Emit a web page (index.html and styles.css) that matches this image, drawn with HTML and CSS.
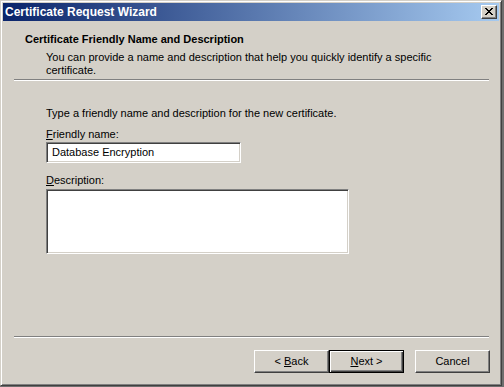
FILE: index.html
```html
<!DOCTYPE html>
<html>
<head>
<meta charset="utf-8">
<title>Certificate Request Wizard</title>
<link rel="stylesheet" href="styles.css">
</head>
<body>
<div class="window">
  <div class="titlebar">
    <span class="title">Certificate Request Wizard</span>
    <span class="close-btn">
      <svg width="8" height="7" viewBox="0 0 8 7"><path d="M0 0h2v1h-2zM6 0h2v1h-2zM1 1h2v1h-2zM5 1h2v1h-2zM2 2h4v1h-4zM3 3h2v1h-2zM2 4h4v1h-4zM1 5h2v1h-2zM5 5h2v1h-2zM0 6h2v1h-2zM6 6h2v1h-2z" fill="#000"/></svg>
    </span>
  </div>
  <div class="header">
    <div class="heading">Certificate Friendly Name and Description</div>
    <div class="subtitle">You can provide a name and description that help you quickly identify a specific certificate.</div>
  </div>
  <div class="separator sep-top"></div>
  <div class="content">
    <div class="intro">Type a friendly name and description for the new certificate.</div>
    <div class="label"><u>F</u>riendly name:</div>
    <div class="textbox name-box">Database Encryption</div>
    <div class="label desc-label"><u>D</u>escription:</div>
    <div class="textbox desc-box"></div>
  </div>
  <div class="separator sep-bottom"></div>
  <div class="footer">
    <span class="button"><span class="btn-label">&lt; <u>B</u>ack</span></span>
    <span class="button default"><span class="btn-label"><u>N</u>ext &gt;</span></span>
    <span class="button cancel"><span class="btn-label">Cancel</span></span>
  </div>
</div>
</body>
</html>
```

FILE: styles.css
```css
html, body {
  margin: 0;
  padding: 0;
}
body {
  width: 504px;
  height: 387px;
  background: #6e6e6e;
  font-family: "Liberation Sans", Arial, sans-serif;
  font-size: 11px;
  line-height: 13px;
  color: #000;
  overflow: hidden;
}
.window {
  box-sizing: border-box;
  width: 502px;
  height: 386px;
  background: #d4d0c8;
  border-top: 1px solid #d4d0c8;
  border-left: 1px solid #d4d0c8;
  border-right: 1px solid #404040;
  border-bottom: 1px solid #404040;
  box-shadow: inset 1px 1px 0 #ffffff, inset -1px -1px 0 #808080;
  padding: 2px;
  display: flex;
  flex-direction: column;
}
.titlebar {
  height: 18px;
  flex: none;
  background: linear-gradient(to right, #0a246a, #a6caf0);
  display: flex;
  align-items: center;
  justify-content: space-between;
  padding: 0 2px 0 2px;
}
.title {
  color: #fff;
  font-weight: bold;
  font-size: 12px;
}
.close-btn {
  box-sizing: border-box;
  width: 16px;
  height: 14px;
  background: #d4d0c8;
  border-top: 1px solid #ffffff;
  border-left: 1px solid #ffffff;
  border-right: 1px solid #404040;
  border-bottom: 1px solid #404040;
  box-shadow: inset -1px -1px 0 #808080;
  display: flex;
  align-items: center;
  justify-content: center;
  padding: 0 1px 1px 0;
}
.close-btn svg {
  display: block;
}
.header {
  padding: 12px 0 0 22px;
  height: 46px;
  flex: none;
}
.heading {
  font-weight: bold;
}
.subtitle {
  margin-top: 5px;
  padding-left: 21px;
  width: 390px;
}
.separator {
  flex: none;
  border-top: 1px solid #808080;
  border-bottom: 1px solid #ffffff;
  height: 0;
  margin: 0 10px 0 11px;
}
.content {
  flex: 1;
  padding: 26px 0 0 43px;
}
.label {
  margin-top: 8px;
}
.desc-label {
  margin-top: 11px;
}
.textbox {
  box-sizing: border-box;
  background: #fff;
  border-top: 1px solid #808080;
  border-left: 1px solid #808080;
  border-right: 1px solid #ffffff;
  border-bottom: 1px solid #ffffff;
  box-shadow: inset 1px 1px 0 #404040, inset -1px -1px 0 #d4d0c8;
  margin-top: 1px;
}
.name-box {
  width: 195px;
  height: 21px;
  padding: 3px 0 0 5px;
}
.desc-box {
  width: 303px;
  height: 65px;
  margin-top: 2px;
}
.footer {
  flex: none;
  display: flex;
  justify-content: flex-end;
  padding: 12px 9px 10px 0;
}
.button {
  box-sizing: border-box;
  width: 75px;
  height: 23px;
  display: flex;
  align-items: center;
  justify-content: center;
  background: #d4d0c8;
  border-top: 1px solid #ffffff;
  border-left: 1px solid #ffffff;
  border-right: 1px solid #404040;
  border-bottom: 1px solid #404040;
  box-shadow: inset -1px -1px 0 #808080;
}
.btn-label {
  white-space: pre;
}
.button.default {
  border: 1px solid #000;
  box-shadow: inset 1px 1px 0 #ffffff, inset -1px -1px 0 #404040, inset -2px -2px 0 #808080;
}
.button.cancel {
  margin-left: 11px;
}
```
